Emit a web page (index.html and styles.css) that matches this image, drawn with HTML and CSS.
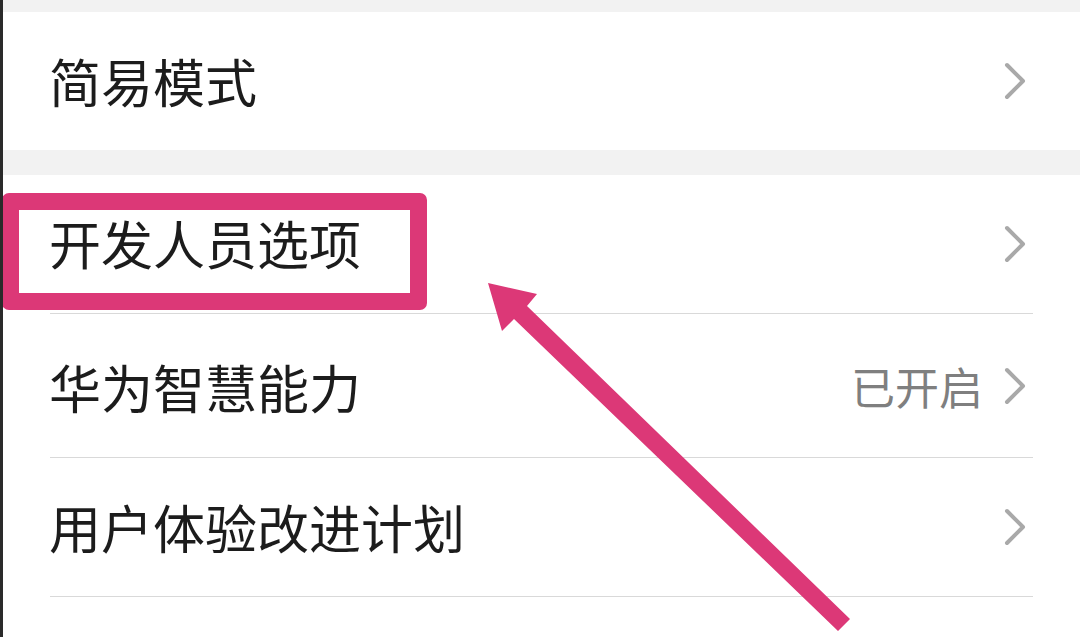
FILE: index.html
```html
<!DOCTYPE html>
<html lang="zh-CN">
<head>
<meta charset="utf-8">
<link rel="stylesheet" href="styles.css">
</head>
<body>
<div class="page">
  <div class="band band-top"></div>
  <div class="group">
    <div class="row row-first">
      <span class="label">简易模式</span>
      <span class="right">
        <svg class="chev" viewBox="0 0 24 40" width="24" height="40"><polyline points="4,4 20,20 4,36" fill="none" stroke="#a9a9a9" stroke-width="4" stroke-linecap="round" stroke-linejoin="round"/></svg>
      </span>
    </div>
  </div>
  <div class="band band-mid"></div>
  <div class="group">
    <div class="row row-a">
      <span class="label">开发人员选项</span>
      <span class="right">
        <svg class="chev" viewBox="0 0 24 40" width="24" height="40"><polyline points="4,4 20,20 4,36" fill="none" stroke="#a9a9a9" stroke-width="4" stroke-linecap="round" stroke-linejoin="round"/></svg>
      </span>
    </div>
    <div class="row row-b">
      <span class="label">华为智慧能力</span>
      <span class="right">
        <span class="value">已开启</span>
        <svg class="chev" viewBox="0 0 24 40" width="24" height="40"><polyline points="4,4 20,20 4,36" fill="none" stroke="#a9a9a9" stroke-width="4" stroke-linecap="round" stroke-linejoin="round"/></svg>
      </span>
    </div>
    <div class="row row-c">
      <span class="label">用户体验改进计划</span>
      <span class="right">
        <svg class="chev" viewBox="0 0 24 40" width="24" height="40"><polyline points="4,4 20,20 4,36" fill="none" stroke="#a9a9a9" stroke-width="4" stroke-linecap="round" stroke-linejoin="round"/></svg>
      </span>
    </div>
    <div class="row row-d"></div>
  </div>

  <div class="highlight"></div>
  <svg class="arrow" viewBox="0 0 1080 637" width="1080" height="637">
    <polygon points="488,283 537,294 527,306 850,619 838,631 514,319 502,331" fill="#dc3877"/>
  </svg>
</div>
</body>
</html>
```

FILE: styles.css
```css
html, body {
  margin: 0;
  padding: 0;
  background: #ffffff;
}
.page {
  position: relative;
  width: 1077px;
  height: 637px;
  overflow: hidden;
  border-left: 3px solid #2a2a2a;
  background: #ffffff;
  font-family: "Noto Sans CJK SC", "Noto Sans", sans-serif;
}
.band {
  background: #f2f2f2;
}
.band-top {
  height: 12px;
}
.band-mid {
  height: 25px;
}
.group {
  background: #ffffff;
}
.row {
  display: flex;
  align-items: center;
  justify-content: space-between;
  margin: 0 47px 0 47px;
  box-sizing: border-box;
  border-bottom: 1px solid #d9d9d9;
}
.row-first {
  height: 138px;
  border-bottom: none;
}
.row-a {
  height: 139px;
}
.row-b {
  height: 144px;
}
.row-c {
  height: 139px;
}
.row-d {
  height: 60px;
  border-bottom: none;
}
.label {
  font-size: 52px;
  color: #1c1c1c;
  line-height: 1;
  margin-left: -1px;
}
.row-first .label { margin-top: -1px; }
.row-a .label { margin-top: -2px; }
.row-b .label { margin-top: 2px; }
.row-c .label { margin-top: 0; }
.right {
  display: flex;
  align-items: center;
  margin-right: 6px;
}
.value {
  font-size: 44px;
  color: #7f7f7f;
  line-height: 1;
  margin-right: 20px;
}
.chev {
  display: block;
}
.row-first .chev { margin-top: -1px; }
.highlight {
  position: absolute;
  left: -1px;
  top: 193px;
  width: 425px;
  height: 117px;
  box-sizing: border-box;
  border: 17px solid #dc3877;
  border-radius: 7px;
}
.arrow {
  position: absolute;
  left: -3px;
  top: 0;
}
```
